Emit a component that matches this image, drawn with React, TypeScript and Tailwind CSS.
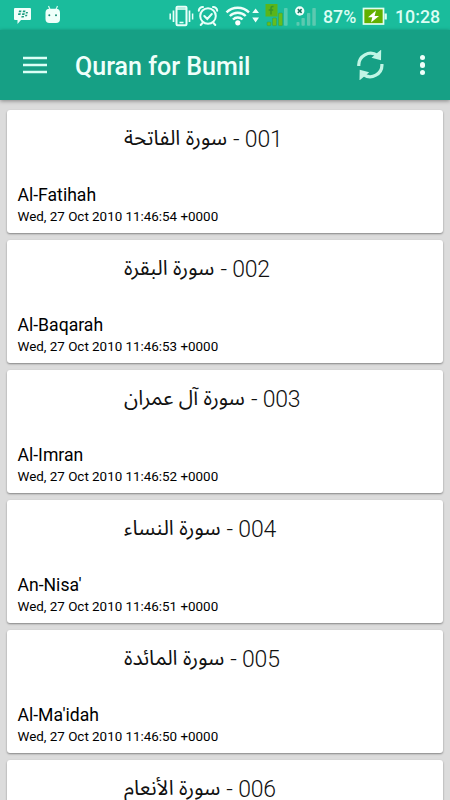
import React from "react";

interface Surah {
  number: string;
  arabic: string;
  name: string;
  date: string;
}

const surahs: Surah[] = [
  {
    number: "001",
    arabic: "سورة الفاتحة",
    name: "Al-Fatihah",
    date: "Wed, 27 Oct 2010 11:46:54 +0000",
  },
  {
    number: "002",
    arabic: "سورة البقرة",
    name: "Al-Baqarah",
    date: "Wed, 27 Oct 2010 11:46:53 +0000",
  },
  {
    number: "003",
    arabic: "سورة آل عمران",
    name: "Al-Imran",
    date: "Wed, 27 Oct 2010 11:46:52 +0000",
  },
  {
    number: "004",
    arabic: "سورة النساء",
    name: "An-Nisa'",
    date: "Wed, 27 Oct 2010 11:46:51 +0000",
  },
  {
    number: "005",
    arabic: "سورة المائدة",
    name: "Al-Ma'idah",
    date: "Wed, 27 Oct 2010 11:46:50 +0000",
  },
  {
    number: "006",
    arabic: "سورة الأنعام",
    name: "Al-An'am",
    date: "Wed, 27 Oct 2010 11:46:49 +0000",
  },
];

// All the status icons share one strip, drawn at screen scale
const StatusIcons = () => (
  <svg width="318" height="30" viewBox="0 0 318 30" className="shrink-0">
    {/* messenger */}
    <path
      d="M15 8h15a1 1 0 0 1 1 1v10a1 1 0 0 1-1 1h-9l-3.500 4v-4H15a1 1 0 0 1-1-1V9a1 1 0 0 1 1-1z"
      fill="#f1fffb"
    />
    <g fill="#1a9c80">
      <path d="M19 10.500h2.500l-.4 1.700h-2.400zM23 10.500h2.500l-.4 1.700h-2.400zM18.300 13.300h2.500l-.4 1.700H18zM22.300 13.300h2.500l-.4 1.700h-2.400zM26 12h2l-.4 1.600h-2zM25.400 14.700h2l-.4 1.600h-2zM21.600 15.900h2.500l-.4 1.600h-2.400z" />
    </g>
    {/* android head */}
    <path
      d="M48.500 6l1.500 3.500M57.500 6l-1.500 3.500"
      stroke="#d6fbf0"
      strokeWidth="1.200"
    />
    <rect x="45.500" y="8.700" width="14.500" height="14.300" rx="4" fill="#effffa" />
    <circle cx="49.300" cy="15.300" r="1" fill="#168c74" />
    <circle cx="56" cy="15.300" r="1" fill="#168c74" />
    {/* vibrate */}
    <g stroke="#e9fff9" fill="none">
      <rect x="176.500" y="6.800" width="10" height="18.400" rx="1" strokeWidth="2" />
      <path d="M177 9h9M179.500 22.500h4" strokeWidth="1.700" />
      <path d="M173.500 10.500v11.500M189.500 10.500v11.500" strokeWidth="1.700" />
      <path d="M170.200 13.500v6M192.600 13.500v6" strokeWidth="1.500" />
    </g>
    {/* alarm */}
    <g stroke="#e9fff9" fill="none" strokeWidth="2" strokeLinecap="round">
      <circle cx="208" cy="16" r="7.800" />
      <path d="M204.300 16l3 3 4.500-5M202.500 23l-1.800 2M213.500 23l1.800 2" />
      <path d="M198.800 10.800a4 4 0 0 1 4.200-3.900M217.200 10.800a4 4 0 0 0-4.200-3.900" />
    </g>
    {/* wifi */}
    <g stroke="#effffa" fill="none" strokeWidth="2.400">
      <path d="M226.500 12.300a16 16 0 0 1 22.500 0" />
      <path d="M229.800 16a11.300 11.300 0 0 1 15.900 0" />
      <path d="M233 19.500a6.700 6.700 0 0 1 9.500 0" />
    </g>
    <circle cx="237.800" cy="22.800" r="2.600" fill="#fff" />
    <path d="M252.200 13l3.400-4.500L259 13zM252.200 17.500l3.400 5 3.400-5z" fill="#effffa" />
    {/* sim 1 signal */}
    <rect x="265.500" y="4" width="12" height="12.500" fill="#5ab51a" />
    <path
      d="M273.500 6.500h-1q-1.500 0-1.500 1.500v6.500M268.700 10h4.500"
      stroke="#36962a"
      fill="none"
      strokeWidth="1.500"
    />
    <g fill="#66bd1c" stroke="#2f9d4d" strokeWidth="0.500">
      <rect x="267" y="22" width="3.800" height="3.700" rx="0.800" />
      <rect x="272.500" y="18" width="4" height="7.700" rx="0.800" />
      <rect x="278.500" y="13" width="4" height="12.700" rx="0.800" />
    </g>
    <rect x="284" y="8" width="3.600" height="17.700" rx="0.800" fill="#54cbb0" />
    {/* sim 2 signal */}
    <g fill="#5cc9b0">
      <rect x="296.500" y="22" width="3" height="3.700" rx="0.800" />
      <rect x="301.500" y="18" width="3.300" height="7.700" rx="0.800" />
      <rect x="307" y="13" width="3.300" height="12.700" rx="0.800" />
      <rect x="312.300" y="8" width="3.500" height="17.700" rx="0.800" />
    </g>
    <circle cx="299.700" cy="11" r="4.700" fill="#f0fffb" />
    <path
      d="M297.800 9.100l3.800 3.800M301.600 9.100l-3.800 3.800"
      stroke="#16715f"
      strokeWidth="1.500"
    />
  </svg>
);

const BatteryIcon = () => (
  <svg width="26" height="18" viewBox="0 0 26 18" className="shrink-0">
    <rect x="1.500" y="1.500" width="20" height="15.500" fill="#62b000" stroke="#e0fff0" strokeWidth="1.700" />
    <path d="M22.500 6.500h2.300v6h-2.300z" fill="#e0fff0" />
    <path d="M14 3.500L6 10.300h4.300L9 15.500l8-6.500h-4.400z" fill="#fff" />
  </svg>
);

const StatusBar = () => {
  return (
    <div className="w-full h-[30px] bg-[#1abc9c] flex items-center text-[#dcfdf3] font-medium">
      <StatusIcons />
      <span className="w-[44px] pl-[5px] text-[17.8px] leading-[30px] pt-[3px] whitespace-nowrap">
        87%
      </span>
      <span className="flex pt-px">
        <BatteryIcon />
      </span>
      <span className="ml-[7px] text-[17.8px] leading-[30px] pt-[3px]">10:28</span>
    </div>
  );
};

const MenuIcon = () => (
  <svg width="24" height="18" viewBox="0 0 24 18">
    <path
      d="M0 2h24M0 9h24M0 16h24"
      stroke="#dcfff6"
      strokeWidth="2.500"
      fill="none"
    />
  </svg>
);

const RefreshIcon = () => (
  <svg width="28" height="30" viewBox="0 0 28 30">
    <g fill="none" stroke="#c1f5e5" strokeWidth="3.200">
      <path d="M1.800 16A11.800 11.800 0 0 1 20.500 5.600" />
      <path d="M24.900 14A11.800 11.800 0 0 1 6.200 24.400" />
    </g>
    <path d="M24.200-.4l-9.700 8.200 9.500 2.400zM2.500 30.400l9.700-8.200-9.500-2.400z" fill="#c1f5e5" />
  </svg>
);

const Header = () => {
  return (
    <div className="relative w-full h-[70px] bg-[#16a085] flex items-center shadow-[0_1px_4px_rgba(0,0,0,0.4)]">
      <div className="ml-[23px] -mt-px">
        <MenuIcon />
      </div>
      <h1 className="ml-[28px] text-[25px] font-medium text-[#effffa] leading-none whitespace-nowrap pt-[2px]">
        Quran for Bumil
      </h1>
      <div className="ml-auto mr-[35px]">
        <RefreshIcon />
      </div>
      <div className="mr-[25px] flex flex-col gap-[2px]">
        <span className="w-[5.500px] h-[5.500px] rounded-full bg-[#effffa]" />
        <span className="w-[5.500px] h-[5.500px] rounded-full bg-[#effffa]" />
        <span className="w-[5.500px] h-[5.500px] rounded-full bg-[#effffa]" />
      </div>
    </div>
  );
};

const SurahCard = ({ number, arabic, name, date }: Surah) => {
  return (
    <div className="h-[123px] shrink-0 bg-white rounded-[3px] shadow-[0_1px_2px_rgba(0,0,0,0.4)] px-[10px] text-black">
      <div className="h-[74px] pl-[107px] pt-[9px] flex items-start leading-[40px] whitespace-nowrap text-[#111]">
        <span
          dir="rtl"
          className="-mt-px text-[20.8px] font-['Noto_Sans_Arabic','Noto_Naskh_Arabic','DejaVu_Sans',sans-serif]"
        >
          {arabic}
        </span>
        <span className="ml-[6px] mt-px text-[23px] font-light tracking-[-0.2px]">
          - {number}
        </span>
      </div>
      <p className="text-[17.6px] leading-[22px] pl-[0.500px]">{name}</p>
      <p className="text-[13.4px] leading-[21px] pl-[0.500px]">{date}</p>
    </div>
  );
};

const App = () => {
  return (
    <div className="w-[450px] h-[800px] overflow-hidden bg-[#dcdcdc] font-['Roboto',sans-serif]">
      <StatusBar />
      <Header />
      <div className="px-[7px] pt-[10px] flex flex-col gap-[7px]">
        {surahs.map((surah) => (
          <SurahCard key={surah.number} {...surah} />
        ))}
      </div>
    </div>
  );
};

export default App;
